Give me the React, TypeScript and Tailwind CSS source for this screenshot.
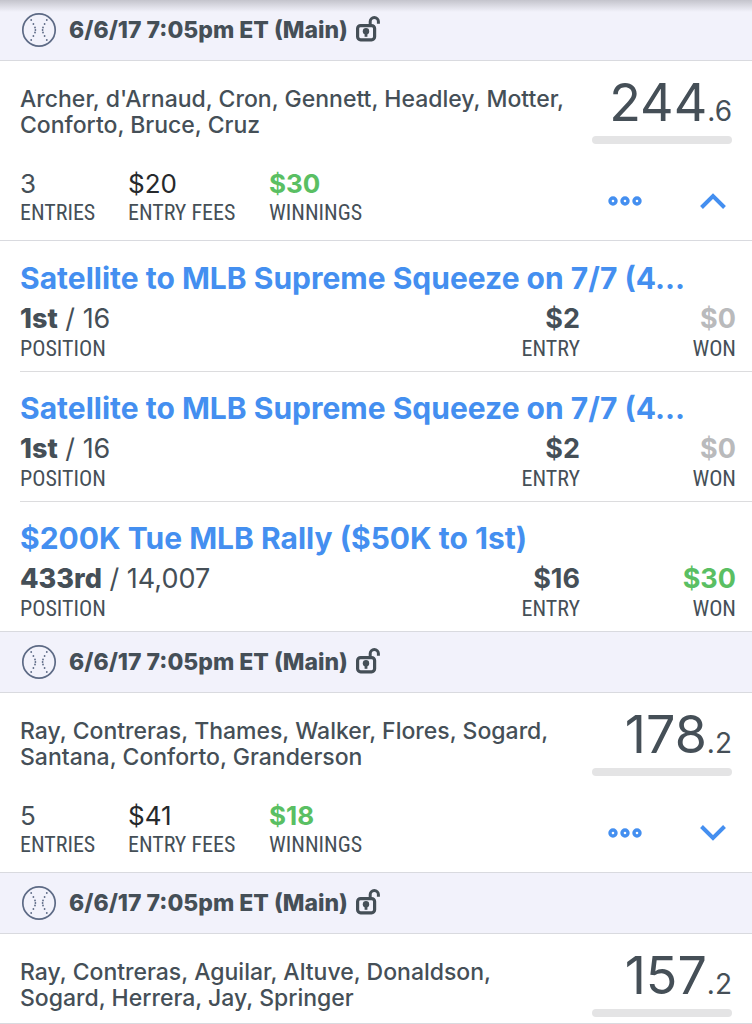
type Contest = {
  title: string
  place: string
  field: string
  entry: string
  won: string
}

type Lineup = {
  players: string
  score: string
  decimal: string
  entries?: string
  fees?: string
  winnings?: string
  contests?: Contest[]
}

const SLATE = '6/6/17 7:05pm ET (Main)'

const lineups: Lineup[] = [
  {
    players: "Archer, d'Arnaud, Cron, Gennett, Headley, Motter, Conforto, Bruce, Cruz",
    score: '244',
    decimal: '.6',
    entries: '3',
    fees: '$20',
    winnings: '$30',
    contests: [
      { title: 'Satellite to MLB Supreme Squeeze on 7/7 (4...', place: '1st', field: '16', entry: '$2', won: '$0' },
      { title: 'Satellite to MLB Supreme Squeeze on 7/7 (4...', place: '1st', field: '16', entry: '$2', won: '$0' },
      { title: '$200K Tue MLB Rally ($50K to 1st)', place: '433rd', field: '14,007', entry: '$16', won: '$30' },
    ],
  },
  {
    players: 'Ray, Contreras, Thames, Walker, Flores, Sogard, Santana, Conforto, Granderson',
    score: '178',
    decimal: '.2',
    entries: '5',
    fees: '$41',
    winnings: '$18',
  },
  {
    players: 'Ray, Contreras, Aguilar, Altuve, Donaldson, Sogard, Herrera, Jay, Springer',
    score: '157',
    decimal: '.2',
  },
]

// left seam of the ball, mirrored for the right one
const stitches = [
  [10.2, 8],
  [12.4, 12],
  [14, 15.5],
  [14.4, 18],
  [14, 20.5],
  [12.4, 24],
  [10.2, 28],
]

const labelClass = "font-['Roboto_Condensed','Roboto',sans-serif] text-[22px] font-normal whitespace-nowrap text-[#454f57]"

function BaseballIcon() {
  return (
    <svg viewBox="0 0 36 36" className="size-9 shrink-0" fill="#5d6a85" aria-hidden="true">
      <circle cx="18" cy="18" r="16.2" fill="none" stroke="#5d6a85" strokeWidth="1.7" />
      {stitches.map(([x, y]) => (
        <g key={y}>
          <circle cx={x} cy={y} r="0.9" />
          <circle cx={36 - x} cy={y} r="0.9" />
        </g>
      ))}
    </svg>
  )
}

function UnlockIcon() {
  return (
    <svg viewBox="0 0 24 28" className="h-7 w-6 shrink-0" fill="none" stroke="#454f57" aria-hidden="true">
      <rect x="1.6" y="9.6" width="17" height="14.2" rx="3" strokeWidth="3.2" />
      <path d="M14.2 9.5V5.6a4.1 4.1 0 0 1 8.2 0V7.8" strokeWidth="3" />
      <circle cx="10" cy="15.2" r="3.2" fill="#454f57" stroke="none" />
      <path d="M10 16v4.8" strokeWidth="2.8" />
    </svg>
  )
}

function SlateHeader() {
  return (
    <header className="flex h-[61px] items-center gap-3 border-b border-[#d9dadf] bg-[#f2f2fb] pl-[21px]">
      <BaseballIcon />
      <h2 className="flex items-center gap-2 text-[23px] font-extrabold text-[#454f57]">
        {SLATE}
        <UnlockIcon />
      </h2>
    </header>
  )
}

function Stat({ value, label, className }: { value: string; label: string; className: string }) {
  return (
    <div className={`flex flex-col-reverse ${className}`}>
      <dt className={`leading-7 ${labelClass}`}>{label}</dt>
      <dd className="text-[26px] leading-[30px]">{value}</dd>
    </div>
  )
}

function ContestRow({ contest, last }: { contest: Contest; last: boolean }) {
  const wonColor = contest.won === '$0' ? 'text-[#b9babc]' : 'text-[#5abf63]'
  return (
    <li className={`ml-5 pt-4 pr-4 pb-[13px] ${last ? '' : 'border-b border-[#dcdcde]'}`}>
      <a href="#" className="block text-[30px] leading-10 font-bold text-[#448ff0]">
        {contest.title}
      </a>
      <dl className="flex text-[#454f57]">
        <div className="flex flex-1 flex-col-reverse">
          <dt className={`leading-[18px] ${labelClass}`}>POSITION</dt>
          <dd className="text-[27px] leading-[42px]">
            <b className="font-extrabold">{contest.place}</b> / {contest.field}
          </dd>
        </div>
        <div className="flex flex-col-reverse text-right">
          <dt className={`leading-[18px] ${labelClass}`}>ENTRY</dt>
          <dd className="text-[27px] leading-[42px] font-bold">{contest.entry}</dd>
        </div>
        <div className="flex w-39 flex-col-reverse text-right">
          <dt className={`leading-[18px] ${labelClass}`}>WON</dt>
          <dd className={`text-[27px] leading-[42px] font-bold ${wonColor}`}>{contest.won}</dd>
        </div>
      </dl>
    </li>
  )
}

function LineupCard({ lineup }: { lineup: Lineup }) {
  const open = Boolean(lineup.contests)
  return (
    <section>
      <SlateHeader />
      <div className="border-b border-[#d9dadf] px-5">
        <div className="flex justify-between gap-3">
          <p className="max-w-[560px] pt-[25px] text-[23px] leading-[26px] font-medium text-[#454f57]">
            {lineup.players}
          </p>
          <div className="w-35 shrink-0 pt-3 pb-1.5">
            <p className="mb-1 text-right text-[52px] leading-[59px] whitespace-nowrap text-[#454f57]">
              {lineup.score}
              <span className="text-[28px] leading-none">{lineup.decimal}</span>
            </p>
            <div className="h-2 rounded-full bg-[#e4e4e5]" />
          </div>
        </div>
        {lineup.entries && (
          <div className="flex items-center justify-between pt-[19px] pb-[13px]">
            <dl className="flex">
              <Stat value={lineup.entries} label="ENTRIES" className="w-[108px] text-[#454f57]" />
              <Stat value={lineup.fees!} label="ENTRY FEES" className="w-[141px] text-[#26292c]" />
              <Stat value={lineup.winnings!} label="WINNINGS" className="font-bold text-[#5abf63]" />
            </dl>
            <div className="flex items-center gap-[50px] pt-1.5 pr-0.5">
              <button type="button" aria-label="More options" className="p-1">
                <svg viewBox="0 0 34 10" className="h-[10px] w-[34px]" fill="none" stroke="#448ff0" strokeWidth="3.4">
                  <circle cx="5" cy="5" r="3" />
                  <circle cx="17" cy="5" r="3" />
                  <circle cx="29" cy="5" r="3" />
                </svg>
              </button>
              <button type="button" aria-label={open ? 'Hide contests' : 'Show contests'} aria-expanded={open} className="p-1">
                <svg viewBox="0 0 26 16" className="h-4 w-[26px]" fill="none" stroke="#448ff0" strokeWidth="4">
                  <path d={open ? 'M1.5 14.5 13 3l11.5 11.5' : 'M1.5 1.5 13 13 24.5 1.5'} />
                </svg>
              </button>
            </div>
          </div>
        )}
      </div>
      {lineup.contests && (
        <ul className="border-b border-[#d9dadf] pt-px">
          {lineup.contests.map((contest, i) => (
            <ContestRow key={i} contest={contest} last={i === lineup.contests!.length - 1} />
          ))}
        </ul>
      )}
    </section>
  )
}

export default function App() {
  return (
    <main className="relative bg-white font-['Inter',sans-serif]">
      <div className="absolute inset-x-0 top-0 h-3 bg-linear-to-b from-[#c4c4cc] to-transparent" />
      {lineups.map((lineup) => (
        <LineupCard key={lineup.players} lineup={lineup} />
      ))}
    </main>
  )
}
